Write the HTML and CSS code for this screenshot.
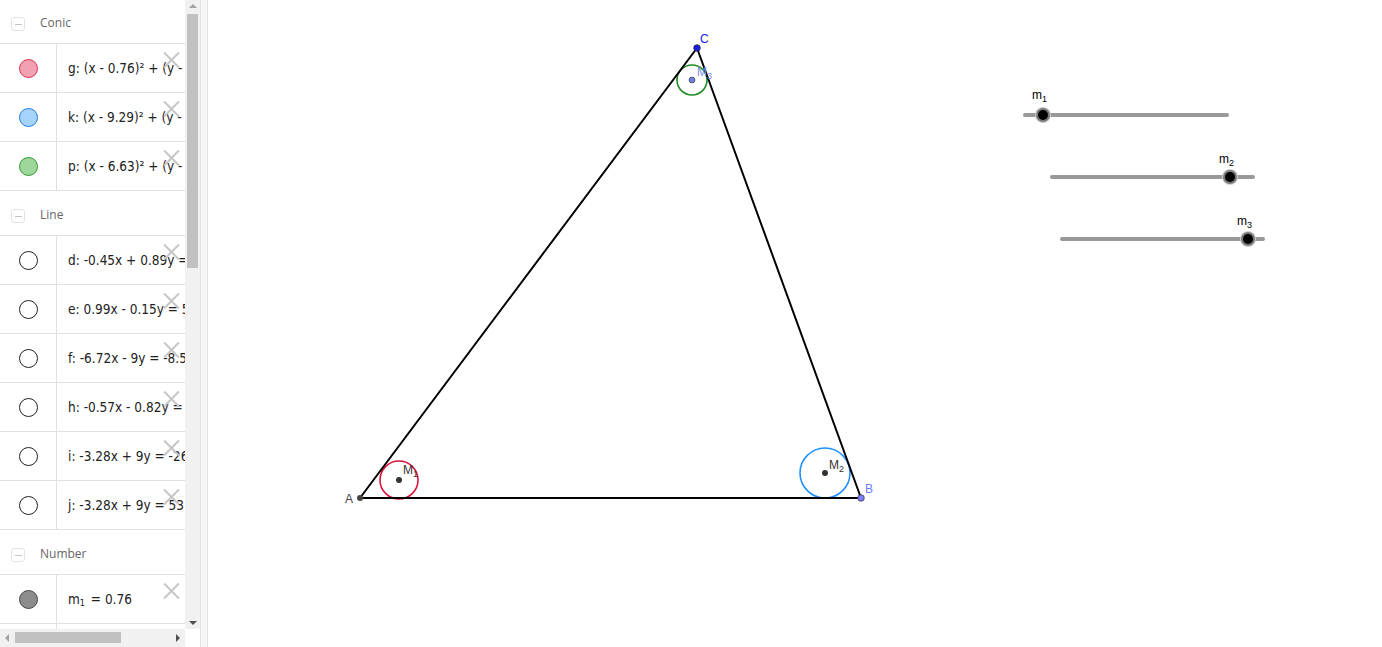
FILE: index.html
```html
<!DOCTYPE html>
<html>
<head>
<meta charset="utf-8">
<link rel="stylesheet" href="styles.css">
</head>
<body>
<div class="app">
  <div class="panel">
    <div class="listwrap">
      <div class="list">
        <div class="group"><span class="toggle"></span><span class="gname">Conic</span></div>
        <div class="row"><div class="mark"><span class="dot dot-red"></span></div><div class="expr">g: (x - 0.76)² + (y - 4.89)² = 0.36</div><span class="del"></span></div>
        <div class="row"><div class="mark"><span class="dot dot-blue"></span></div><div class="expr">k: (x - 9.29)² + (y - 4.9)² = 0.58</div><span class="del"></span></div>
        <div class="row"><div class="mark"><span class="dot dot-green"></span></div><div class="expr">p: (x - 6.63)² + (y - 12.3)² = 0.21</div><span class="del"></span></div>
        <div class="group"><span class="toggle"></span><span class="gname">Line</span></div>
        <div class="row"><div class="mark"><span class="dot dot-empty"></span></div><div class="expr">d: -0.45x + 0.89y = 3.9</div><span class="del"></span></div>
        <div class="row"><div class="mark"><span class="dot dot-empty"></span></div><div class="expr">e: 0.99x - 0.15y = 5.2</div><span class="del"></span></div>
        <div class="row"><div class="mark"><span class="dot dot-empty"></span></div><div class="expr">f: -6.72x - 9y = -8.5</div><span class="del"></span></div>
        <div class="row"><div class="mark"><span class="dot dot-empty"></span></div><div class="expr">h: -0.57x - 0.82y = 1.2</div><span class="del"></span></div>
        <div class="row"><div class="mark"><span class="dot dot-empty"></span></div><div class="expr">i: -3.28x + 9y = -26</div><span class="del"></span></div>
        <div class="row"><div class="mark"><span class="dot dot-empty"></span></div><div class="expr">j: -3.28x + 9y = 53</div><span class="del"></span></div>
        <div class="group"><span class="toggle"></span><span class="gname">Number</span></div>
        <div class="row"><div class="mark"><span class="dot dot-gray"></span></div><div class="expr"><span>m<sub>1</sub> = 0.76</span></div><span class="del"></span></div>
        <div class="row"><div class="mark"><span class="dot dot-gray"></span></div><div class="expr"><span>m<sub>2</sub> = 0.88</span></div><span class="del"></span></div>
      </div>
    </div>
    <div class="vscroll">
      <span class="arrow-up"></span>
      <span class="vthumb"></span>
      <span class="arrow-down"></span>
    </div>
    <div class="hscroll">
      <span class="arrow-left"></span>
      <span class="hthumb"></span>
      <span class="arrow-right"></span>
    </div>
    <div class="corner"></div>
  </div>
  <div class="divider"></div>
  <div class="canvas">
    <svg class="drawing" width="1174" height="647" viewBox="208 0 1174 647" xmlns="http://www.w3.org/2000/svg">
      <circle cx="399" cy="480" r="19" fill="none" stroke="#dc143c" stroke-width="1.6"/>
      <circle cx="825" cy="473" r="25" fill="none" stroke="#1e90ff" stroke-width="1.6"/>
      <circle cx="692" cy="80" r="15" fill="none" stroke="#228b22" stroke-width="1.6"/>
      <polygon points="360,498 861,498 697,48" fill="none" stroke="#000" stroke-width="2" stroke-linejoin="round"/>
      <circle cx="399" cy="480" r="3" fill="#333"/>
      <circle cx="825" cy="473" r="3" fill="#333"/>
      <circle cx="692" cy="80" r="3" fill="#6b7ee0" stroke="#333" stroke-width="0.6"/>
      <circle cx="360" cy="498" r="3" fill="#444"/>
      <circle cx="861" cy="498" r="3.3" fill="#7d7dff" stroke="#333" stroke-width="0.7"/>
      <circle cx="697" cy="48" r="3.3" fill="#1a1aee" stroke="#222" stroke-width="0.7"/>
      <text class="lbl" x="345" y="503" fill="#444">A</text>
      <text class="lbl" x="865" y="493" fill="#6b7ff5">B</text>
      <text class="lbl" x="700" y="43" fill="#2020ee">C</text>
      <text class="lbl" x="403" y="474" fill="#333">M<tspan class="sub" dy="3">1</tspan></text>
      <text class="lbl" x="829" y="469" fill="#333">M<tspan class="sub" dy="3">2</tspan></text>
      <text class="lbl" x="697" y="76" fill="#7b8ff5">M<tspan class="sub" dy="3">3</tspan></text>

      <line x1="1025" y1="115" x2="1227" y2="115" class="track"/>
      <circle cx="1043" cy="115" r="8" class="knob-halo"/>
      <circle cx="1043" cy="115" r="7" class="knob-ring"/>
      <circle cx="1043" cy="115" r="5" fill="#000"/>
      <text class="lbl" x="1032" y="99" fill="#000">m<tspan class="sub" dy="3">1</tspan></text>

      <line x1="1052" y1="177" x2="1253" y2="177" class="track"/>
      <circle cx="1230" cy="177" r="8" class="knob-halo"/>
      <circle cx="1230" cy="177" r="7" class="knob-ring"/>
      <circle cx="1230" cy="177" r="5" fill="#000"/>
      <text class="lbl" x="1219" y="163" fill="#000">m<tspan class="sub" dy="3">2</tspan></text>

      <line x1="1062" y1="239" x2="1263" y2="239" class="track"/>
      <circle cx="1248" cy="239" r="8" class="knob-halo"/>
      <circle cx="1248" cy="239" r="7" class="knob-ring"/>
      <circle cx="1248" cy="239" r="5" fill="#000"/>
      <text class="lbl" x="1237" y="225" fill="#000">m<tspan class="sub" dy="3">3</tspan></text>
    </svg>
  </div>
</div>
</body>
</html>
```
FILE: styles.css
```css
html, body {
  margin: 0;
  padding: 0;
  background: #fff;
  overflow: hidden;
}
.app {
  display: flex;
  width: 1382px;
  height: 647px;
}
.panel {
  width: 200px;
  flex: none;
  display: grid;
  grid-template-columns: 185px 15px;
  grid-template-rows: 629px 18px;
  background: #fff;
}
.listwrap {
  overflow: hidden;
  position: relative;
}
.list {
  margin-top: -1px;
  display: flex;
  flex-direction: column;
}
.group {
  height: 44px;
  padding-top: 3px;
  box-sizing: content-box;
  height: 41px;
  border-bottom: 1px solid #e0e0e0;
  display: flex;
  align-items: center;
  flex: none;
}
.toggle {
  width: 12px;
  height: 12px;
  margin-left: 11px;
  margin-top: 3px;
  border: 1px solid #e2e2e2;
  border-radius: 3px;
  position: relative;
  box-sizing: content-box;
}
.toggle::after {
  content: "";
  position: absolute;
  left: 3px;
  top: 6px;
  width: 7px;
  height: 1px;
  background: #c4c4c4;
}
.gname {
  margin-left: 15px;
  font-family: "Open Sans", "Liberation Sans", sans-serif;
  font-size: 12px;
  color: #666;
}
.row {
  height: 48px;
  border-bottom: 1px solid #e0e0e0;
  display: flex;
  flex: none;
  position: relative;
}
.mark {
  width: 56px;
  flex: none;
  border-right: 1px solid #e0e0e0;
  display: flex;
  align-items: center;
  justify-content: center;
}
.dot {
  width: 17px;
  height: 17px;
  border-radius: 50%;
  border: 1px solid #000;
  box-sizing: content-box;
}
.dot-red { background: #f2a1b0; border-color: #dc2f56; }
.dot-blue { background: #a6d4fd; border-color: #1f7ee6; }
.dot-green { background: #9ed79b; border-color: #2f9a2f; }
.dot-empty { background: #fff; border-color: #222; }
.dot-gray { background: #8c8c8c; border-color: #444; }
.expr {
  padding-left: 11px;
  display: flex;
  align-items: center;
  white-space: nowrap;
  font-family: "DejaVu Sans Condensed", "DejaVu Sans", sans-serif;
  font-size: 13.5px;
  color: #222;
}
.expr sub {
  font-size: 9px;
  vertical-align: -2px;
  line-height: 0;
  margin-right: 2px;
}
.del {
  position: absolute;
  left: 163px;
  top: 7px;
  width: 17px;
  height: 17px;
}
.del::before, .del::after {
  content: "";
  position: absolute;
  left: -2px;
  top: 7.5px;
  width: 21px;
  height: 2px;
  background: #c6c6c6;
  transform: rotate(45deg);
}
.del::after {
  transform: rotate(-45deg);
}
.vscroll {
  background: #f1f1f1;
  position: relative;
}
.vthumb {
  position: absolute;
  left: 2px;
  right: 2px;
  top: 14px;
  height: 254px;
  background: #c1c1c1;
}
.arrow-up {
  position: absolute;
  left: 4px;
  top: 4px;
  border-left: 4px solid transparent;
  border-right: 4px solid transparent;
  border-bottom: 4px solid #a3a3a3;
}
.arrow-down {
  position: absolute;
  left: 4px;
  bottom: 4px;
  border-left: 4px solid transparent;
  border-right: 4px solid transparent;
  border-top: 4px solid #505050;
}
.hscroll {
  background: #f1f1f1;
  position: relative;
}
.hthumb {
  position: absolute;
  left: 15px;
  width: 106px;
  top: 3px;
  height: 11px;
  background: #c1c1c1;
}
.arrow-left {
  position: absolute;
  left: 5px;
  top: 5px;
  border-top: 4px solid transparent;
  border-bottom: 4px solid transparent;
  border-right: 4px solid #a3a3a3;
}
.arrow-right {
  position: absolute;
  right: 5px;
  top: 5px;
  border-top: 4px solid transparent;
  border-bottom: 4px solid transparent;
  border-left: 4px solid #505050;
}
.corner {
  background: #fff;
}
.divider {
  width: 6px;
  flex: none;
  background: #f7f7f7;
  border-left: 1px solid #e4e4e4;
  border-right: 1px solid #e4e4e4;
}
.canvas {
  flex: 1;
  position: relative;
  overflow: hidden;
}
.drawing {
  display: block;
}
.lbl {
  font-family: "Liberation Sans", Arial, sans-serif;
  font-size: 12px;
}
.lbl .sub {
  font-size: 9px;
}
.track {
  stroke: #999;
  stroke-width: 4;
  stroke-linecap: round;
}
.knob-halo {
  fill: #cfcfcf;
}
.knob-ring {
  fill: #7a7a7a;
}
```
